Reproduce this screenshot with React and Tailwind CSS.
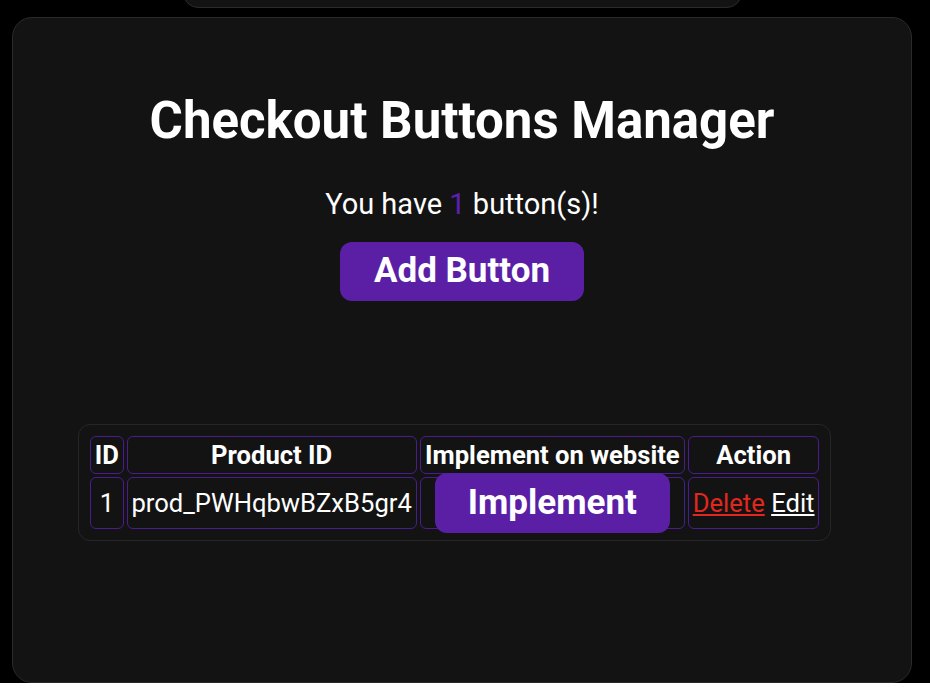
export default function App() {
  const buttons = [{ id: 1, productId: 'prod_PWHqbwBZxB5gr4' }];

  return (
    <div className="min-h-[698px] bg-black font-['Roboto',sans-serif] text-white">
      <div className="ml-[183px] -mt-[22px] h-[30px] w-[559px] rounded-[15px] border border-[#2a2a2a] bg-[#131313]" />
      <div className="ml-[12px] mt-[9px] h-[666px] w-[900px] rounded-[20px] border border-[#2a2a2a] bg-[#131313]">
        <div className="flex flex-col items-center">
          <h1 className="mt-[73px] text-[51px] font-bold leading-[60px]">Checkout Buttons Manager</h1>
          <p className="mt-[36px] text-[29px] leading-[34px]">
            You have <span className="text-[#5b21b6]">{buttons.length}</span> button(s)!
          </p>
          <button className="mt-[21px] h-[59px] w-[244px] rounded-[12px] bg-[#5b1fa6] text-[35px] font-bold">
            Add Button
          </button>
        </div>

        <div className="ml-[65px] mt-[123px] w-[753px] rounded-[12px] border border-[#262626] p-[8px]">
          <table className="table-fixed border-separate border-spacing-[3px] whitespace-nowrap text-[25.6px] leading-[28px]">
            <thead>
              <tr>
                <th className="w-[34px] rounded-[6px] border border-[#4a1d8f] px-0 py-[4px] font-bold">ID</th>
                <th className="w-[290px] rounded-[6px] border border-[#4a1d8f] px-0 py-[4px] font-bold">Product ID</th>
                <th className="w-[266px] rounded-[6px] border border-[#4a1d8f] px-0 py-[4px] font-bold">Implement on website</th>
                <th className="w-[131px] rounded-[6px] border border-[#4a1d8f] px-0 py-[4px] font-bold">Action</th>
              </tr>
            </thead>
            <tbody>
              {buttons.map((b) => (
                <tr key={b.id}>
                  <td className="h-[52px] rounded-[6px] border border-[#4a1d8f] px-0 py-[4px] text-center">{b.id}</td>
                  <td className="rounded-[6px] border border-[#4a1d8f] px-0 py-[4px] text-center">{b.productId}</td>
                  <td className="rounded-[6px] border border-[#4a1d8f] px-0 py-[4px] text-center">
                    <button className="-my-[9px] h-[60px] w-[235px] rounded-[12px] bg-[#5b1fa6] text-[35px] font-bold">
                      Implement
                    </button>
                  </td>
                  <td className="rounded-[6px] border border-[#4a1d8f] px-0 py-[4px] text-center">
                    <a href="#" className="text-[#e0281e] underline">Delete</a>{' '}
                    <a href="#" className="text-white underline">Edit</a>
                  </td>
                </tr>
              ))}
            </tbody>
          </table>
        </div>
      </div>
    </div>
  );
}
